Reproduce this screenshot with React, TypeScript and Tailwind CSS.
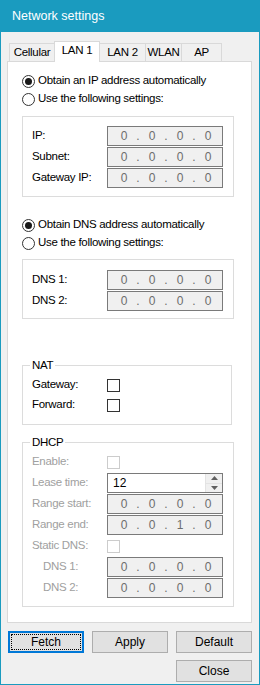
import React from 'react';

const font = { fontFamily: '"Liberation Sans", Arial, sans-serif' };

function Radio({ checked, label }: { checked?: boolean; label: string }) {
  return (
    <div className="flex items-center h-[18px]">
      <span className="w-[13px] h-[13px] rounded-full border border-[#333333] bg-white flex items-center justify-center">
        {checked && <span className="w-[7px] h-[7px] rounded-full bg-[#1a1a1a]" />}
      </span>
      <span className="ml-[3px] text-[11.5px] text-black">{label}</span>
    </div>
  );
}

function IpField({ value = '0 . 0 . 0 . 0' }: { value?: string }) {
  const parts = value.split(' . ');
  return (
    <div className="w-[116px] h-[20px] border border-[#7a7a7a] bg-[#f0f0f0] flex items-center text-[12px] tracking-normal text-[#6d6d6d] pl-[12px]">
      {parts.map((p, i) => (
        <React.Fragment key={i}>
          <span className="w-[8px] text-center">{p}</span>
          {i < parts.length - 1 && <span className="w-[20px] text-center">.</span>}
        </React.Fragment>
      ))}
    </div>
  );
}

function Check({ disabled }: { disabled?: boolean }) {
  return (
    <span
      className={`block w-[13px] h-[13px] border bg-white ${disabled ? 'border-[#cccccc]' : 'border-[#333333]'}`}
    />
  );
}

function Row({ label, children, disabled, indent }: { label: string; children: React.ReactNode; disabled?: boolean; indent?: boolean }) {
  return (
    <div className="flex items-center h-[20px]">
      <span className={`w-[75px] text-[11.5px] ${indent ? 'pl-[11px]' : ''} ${disabled ? 'text-[#a0a0a0]' : 'text-black'}`}>{label}</span>
      {children}
    </div>
  );
}

function Tab({ label, w, active }: { label: string; w: string; active?: boolean }) {
  return active ? (
    <div className={`${w} h-[21px] -ml-px -mb-px relative z-10 bg-white border-t border-l border-r border-[#d9d9d9] flex items-center justify-center text-[11.5px] text-black pb-[2px]`}>
      {label}
    </div>
  ) : (
    <div className={`${w} h-[18px] -ml-px first:ml-0 border-t border-l border-r border-[#d9d9d9] bg-[#f0f0f0] flex items-center justify-center text-[11.5px] text-black`}>
      {label}
    </div>
  );
}

function Btn({ label, focused }: { label: string; focused?: boolean }) {
  return focused ? (
    <button className="w-[76px] h-[22px] border-2 border-[#0078d7] bg-[#e1e1e1] p-px">
      <span className="flex w-full h-full items-center justify-center border border-dotted border-black text-[12px] text-black">{label}</span>
    </button>
  ) : (
    <button className="w-[76px] h-[22px] border border-[#adadad] bg-[#e1e1e1] text-[12px] text-black flex items-center justify-center">
      {label}
    </button>
  );
}

export default function App() {
  return (
    <div style={font} className="w-[260px] h-[685px] border border-[#1a9bbf] bg-[#f0f0f0] flex flex-col tracking-[-0.3px]">
      <div className="h-[31px] bg-[#1a9bbf] flex items-center pl-[11px] pb-[1px] text-[12.5px] tracking-normal text-white shrink-0">Network settings</div>

      <div className="flex items-end h-[29px] pl-[8px] shrink-0">
        <Tab label="Cellular" w="w-[46px]" />
        <Tab label="LAN 1" w="w-[46px]" active />
        <Tab label="LAN 2" w="w-[47px]" />
        <Tab label="WLAN" w="w-[37px]" />
        <Tab label="AP" w="w-[41px]" />
      </div>

      <div className="ml-[6px] w-[245px] h-[562px] bg-white border border-[#d9d9d9] pl-[14px] pt-[10px] shrink-0">
        <Radio checked label="Obtain an IP address automatically" />
        <Radio label="Use the following settings:" />

        <div className="mt-[8px] w-[212px] h-[81px] border border-[#dcdcdc] pl-[9px] pt-[9px] flex flex-col gap-[1px]">
          <Row label="IP:"><IpField /></Row>
          <Row label="Subnet:"><IpField /></Row>
          <Row label="Gateway IP:"><IpField /></Row>
        </div>

        <div className="mt-[19px]">
          <Radio checked label="Obtain DNS address automatically" />
          <Radio label="Use the following settings:" />
        </div>

        <div className="mt-[7px] w-[212px] h-[60px] border border-[#dcdcdc] pl-[9px] pt-[10px] flex flex-col gap-[1px]">
          <Row label="DNS 1:"><IpField /></Row>
          <Row label="DNS 2:"><IpField /></Row>
        </div>

        <fieldset className="mt-[38px] w-[210px] h-[68px] border border-[#dcdcdc] pl-[7px] pr-0 pt-[2px]">
          <legend className="px-[2px] text-[11.5px] leading-[16px] text-black">NAT</legend>
          <div className="pl-[2px]">
            <Row label="Gateway:"><Check /></Row>
            <Row label="Forward:"><Check /></Row>
          </div>
        </fieldset>

        <fieldset className="mt-[9px] w-[212px] h-[173px] border border-[#dcdcdc] pl-[7px] pt-[2px]">
          <legend className="px-[2px] text-[11.5px] leading-[16px] text-black">DHCP</legend>
          <div className="pl-[2px] flex flex-col gap-[1px]">
            <Row label="Enable:" disabled><Check disabled /></Row>
            <Row label="Lease time:" disabled>
              <div className="w-[116px] h-[20px] border border-[#7a7a7a] bg-white flex">
                <span className="flex-1 pl-[5px] flex items-center text-[12px] tracking-normal text-black">12</span>
                <div className="w-[17px] flex flex-col border-l border-[#e3e3e3] bg-[#f0f0f0]">
                  <div className="flex-1 flex items-center justify-center border-b border-[#e3e3e3]">
                    <svg width="7" height="4" viewBox="0 0 7 4"><path d="M3.5 0L7 4H0z" fill="#606060" /></svg>
                  </div>
                  <div className="flex-1 flex items-center justify-center">
                    <svg width="7" height="4" viewBox="0 0 7 4"><path d="M0 0h7L3.5 4z" fill="#606060" /></svg>
                  </div>
                </div>
              </div>
            </Row>
            <Row label="Range start:" disabled><IpField /></Row>
            <Row label="Range end:" disabled><IpField value="0 . 0 . 1 . 0" /></Row>
            <Row label="Static DNS:" disabled><Check disabled /></Row>
            <Row label="DNS 1:" disabled indent><IpField /></Row>
            <Row label="DNS 2:" disabled indent><IpField /></Row>
          </div>
        </fieldset>
      </div>

      <div className="flex gap-[8px] pl-[7px] mt-[8px] tracking-normal">
        <Btn label="Fetch" focused />
        <Btn label="Apply" />
        <Btn label="Default" />
      </div>
      <div className="flex justify-end pr-[7px] mt-[7px] tracking-normal">
        <Btn label="Close" />
      </div>
    </div>
  );
}
